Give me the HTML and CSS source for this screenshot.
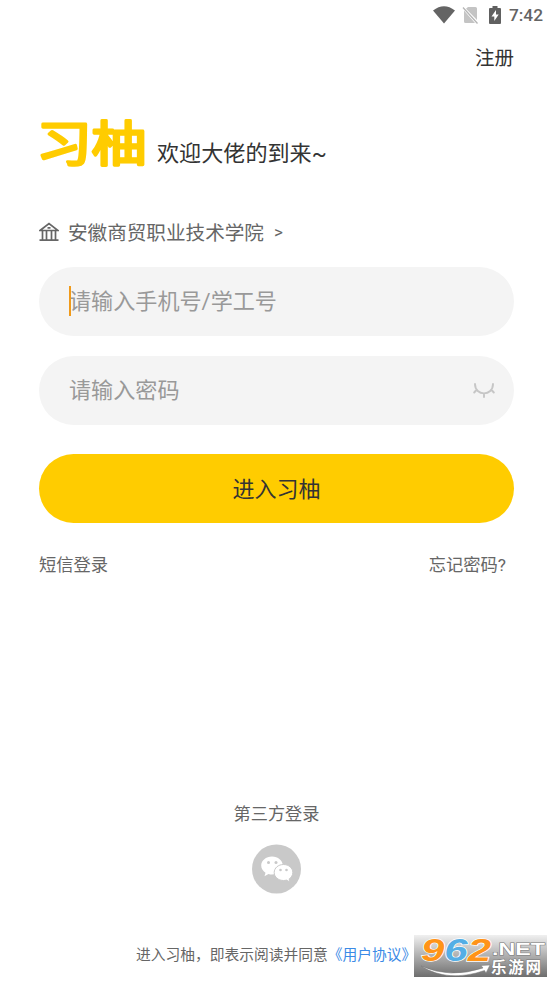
FILE: index.html
```html
<!DOCTYPE html>
<html lang="zh-CN">
<head>
<meta charset="utf-8">
<title>习柚</title>
<link rel="stylesheet" href="styles.css">
</head>
<body>
<div class="screen">
  <header class="status">
    <svg class="wifi" width="22" height="18" viewBox="0 0 22 18"><path d="M0 4.5Q11-4 22 4.5L11 17.5Z" fill="#646464"/></svg>
    <svg class="sim" width="17" height="18" viewBox="0 0 17 18"><path d="M6 1h7.500q1.500 0 1.500 1.500V14L4 2.800ZM2 4.500 13 17H3.500Q2 17 2 15.500Z" fill="#c4c4c4"/><path d="M1 1.500 15.500 17.500" stroke="#b5b5b5" stroke-width="1.300"/></svg>
    <svg class="battery" width="12" height="18" viewBox="0 0 12 18"><path d="M3.500 0h5v2H11q1 0 1 1v14q0 1-1 1H1q-1 0-1-1V3q0-1 1-1h2.500Z" fill="#606060"/><path d="M7 4 2.500 10.500H5.300V15L9.700 8.500H7Z" fill="#fff"/></svg>
    <span class="time">7:42</span>
  </header>
  <nav class="top"><a class="register">注册</a></nav>
  <main class="content">
    <div class="brand">
      <svg class="logo" width="112" height="54" viewBox="0 0 112 54"><text class="logo-text" transform="translate(-2.500 44.500) scale(1.060 .91)">习柚</text></svg>
      <h1 class="welcome">欢迎大佬的到来~</h1>
    </div>
    <div class="school">
      <svg class="school-icon" width="20" height="20" viewBox="0 0 20 20" fill="none" stroke="#666" stroke-width="1.700"><path d="M1 8.500 10 1.500l9 7ZM3.500 8.500v9M7.500 9v8.500M12.500 9v8.500M16.500 8.500v9M.5 18.200h19M8.500 5.800h3"/></svg>
      <span class="school-name">安徽商贸职业技术学院</span><span class="more">&gt;</span>
    </div>
    <div class="field"><i class="caret"></i><span>请输入手机号/学工号</span></div>
    <div class="field password"><span>请输入密码</span>
      <svg width="22" height="16" viewBox="0 0 22 16" fill="none" stroke="#c6c6c6" stroke-width="1.900" stroke-linecap="round"><path d="M2 1C2 13.500 20 13.500 20 1M3.400 7 1.200 9.500M18.600 7 20.800 9.500M11 10.500v3.500"/></svg>
    </div>
    <div class="submit">进入习柚</div>
    <div class="links"><a>短信登录</a><a class="forgot">忘记密码?</a></div>
  </main>
  <section class="third">
    <span>第三方登录</span>
    <svg width="50" height="50" viewBox="0 0 50 50"><circle cx="24.500" cy="25" r="24.500" fill="#c9c9c9"/><path d="M20 12.500c-6 0-10.800 4-10.800 9 0 3 1.700 5.500 4.300 7.200l-1 3.500 4-2.200q1.700.5 3.500.5c6 0 10.800-4 10.800-9s-4.800-9-10.800-9Z" fill="#fff"/><path d="M31.500 20.500c-5.200 0-9.300 3.500-9.300 8s4.100 8 9.300 8q1.600 0 3-.4l3.500 2-.8-3.200c2.300-1.500 3.600-3.800 3.600-6.400 0-4.500-4.100-8-9.300-8Z" fill="#fff" stroke="#c9c9c9"/><g fill="#c9c9c9"><circle cx="16.500" cy="18.500" r="1.500"/><circle cx="24" cy="18.500" r="1.500"/><circle cx="28.500" cy="26" r="1.300"/><circle cx="34.500" cy="26" r="1.300"/></g></svg>
  </section>
  <footer class="agreement">进入习柚，即表示阅读并同意<a>《用户协议》</a></footer>
  <svg class="watermark" width="133" height="42" viewBox="0 0 133 42">
    <defs><linearGradient id="shade" x2="0" y2="1"><stop stop-color="#f0f0f0"/><stop offset=".45" stop-color="#b5b5b5"/><stop offset="1" stop-color="#6e6e6e"/></linearGradient></defs>
    <rect width="133" height="42" fill="url(#shade)"/>
    <path d="M7 31Q36 44 69 33L67 30.500 76 30 72 38 70.500 35.500Q34 48 7 31Z" fill="#fff" stroke="#777" stroke-width=".5"/>
    <text class="wm-num" x="7" y="26" textLength="70" lengthAdjust="spacingAndGlyphs"><tspan fill="#ff9418">9</tspan><tspan fill="#54aee5">6</tspan><tspan fill="#ff9418">2</tspan></text>
    <text class="wm-net" x="78" y="20" textLength="53" lengthAdjust="spacingAndGlyphs">.NET</text>
    <text class="wm-cn" x="77" y="37.500" textLength="50">乐游网</text>
  </svg>
</div>
</body>
</html>
```
FILE: styles.css
```css
body {
  margin: 0;
  background: #fff;
  color: #666;
  font-family: Roboto, "Noto Sans CJK SC", sans-serif;
}
.screen {
  position: relative;
  box-sizing: border-box;
  width: 553px;
  height: 983px;
  overflow: hidden;
}
.status {
  display: flex;
  align-items: center;
  justify-content: flex-end;
  height: 30px;
  padding-right: 10px;
}
.sim { margin-left: 7px; }
.battery { margin-left: 10px; }
.time {
  margin-left: 8px;
  font: 500 17.3px/32px Roboto, sans-serif;
  color: #646464;
}
.top {
  display: flex;
  justify-content: flex-end;
  height: 54px;
  padding-right: 39px;
}
.register {
  font-family: "Noto Sans CJK SC", sans-serif;
  font-size: 19.5px;
  line-height: 53px;
  color: #333;
}
.content { padding: 32px 39px 0; }
.brand {
  display: flex;
  height: 54px;
}
.logo { overflow: visible; }
.logo-text {
  font-family: "Noto Sans CJK SC", sans-serif;
  font-size: 52px;
  font-weight: 400;
  fill: #fc0;
  stroke: #fc0;
  stroke-width: 3.2;
  stroke-linejoin: round;
}
.welcome {
  margin: 21px 0 0 6px;
  font-size: 22.1px;
  font-weight: 400;
  line-height: 32px;
  color: #333;
}
.school {
  display: flex;
  align-items: center;
  height: 30px;
  margin: 47px 0 20px;
}
.school-name {
  margin-left: 9px;
  font-size: 19.6px;
  line-height: 30px;
  padding-top: 3px;
}
.more {
  margin-left: 10px;
  font-size: 17px;
}
.field {
  position: relative;
  display: flex;
  align-items: center;
  box-sizing: border-box;
  height: 69px;
  margin-bottom: 20px;
  padding: 0 19px 0 30px;
  border-radius: 35px;
  background: #f4f4f4;
  font-size: 22.1px;
  line-height: 71px;
  color: #999;
}
.caret {
  position: absolute;
  left: 30px;
  top: 19px;
  width: 2px;
  height: 30px;
  background: #f09a1a;
}
.password {
  justify-content: space-between;
  margin-bottom: 29px;
}
.submit {
  height: 69px;
  border-radius: 35px;
  background: #fc0;
  font-size: 22px;
  line-height: 71px;
  text-align: center;
  color: #333;
}
.links {
  display: flex;
  justify-content: space-between;
  margin-top: 27px;
  padding-right: 8px;
  font-size: 17.3px;
  line-height: 30px;
}
.third {
  display: flex;
  flex-direction: column;
  align-items: center;
  margin-top: 219px;
  font-size: 17.2px;
  line-height: 30px;
}
.third svg { margin-top: 15px; }
.agreement {
  margin: 46px 0 0 136px;
  font-size: 14.75px;
  line-height: 30px;
  white-space: nowrap;
}
.agreement a { color: #3b8ae6; }
.watermark {
  position: absolute;
  left: 414px;
  top: 935px;
}
.wm-num {
  font: italic 700 31px "Liberation Sans", sans-serif;
  stroke: #fff;
  stroke-width: 1.4;
  paint-order: stroke;
}
.wm-net {
  font: 700 17px "Liberation Sans", sans-serif;
  fill: #fff;
  stroke: #777;
  stroke-width: 1;
  paint-order: stroke;
}
.wm-cn {
  font-family: "Noto Sans CJK SC", sans-serif;
  font-size: 15.5px;
  font-weight: 700;
  fill: #fff;
  stroke: #777;
  stroke-width: 1;
  paint-order: stroke;
}
```
